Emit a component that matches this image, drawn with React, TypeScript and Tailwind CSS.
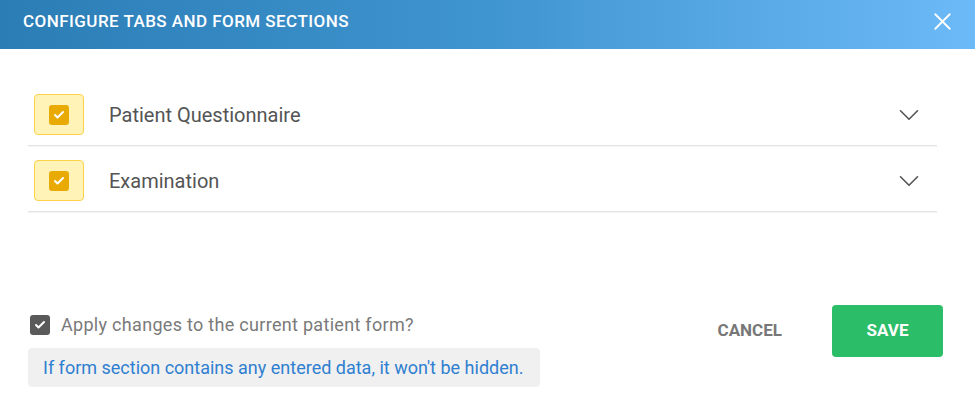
import { Check, ChevronDown, X } from "lucide-react";

const sections = ["Patient Questionnaire", "Examination"];

const App = () => {
  return (
    <div className="w-[975px] h-[415px] bg-white font-['Roboto',sans-serif] flex flex-col">
      <div className="h-[49px] shrink-0 flex items-center justify-between pl-[23px] pr-[18px] pb-[6px] bg-gradient-to-r from-[#2b7db5] via-[#3f95d0] to-[#6cbaf7]">
        <h1 className="text-white text-[17px] font-medium tracking-[0.45px]">
          CONFIGURE TABS AND FORM SECTIONS
        </h1>
        <X className="text-white w-[29px] h-[29px]" strokeWidth={1.5} />
      </div>

      <div className="pt-[31px] pl-[28px] pr-[38px]">
        {sections.map((name) => (
          <div
            key={name}
            className="flex items-center h-[66px] pt-[4px] border-b border-[#e3e3e3] shadow-[0_1px_1px_rgba(0,0,0,0.04)]"
          >
            <div className="ml-[6px] w-[50px] h-[41px] rounded-[4px] bg-[#fff3b8] border border-[#fdd24a] flex items-center justify-center">
              <div className="w-[20px] h-[20px] rounded-[3px] bg-[#eaaa05] flex items-center justify-center">
                <Check className="text-white w-[12px] h-[12px]" strokeWidth={4} />
              </div>
            </div>
            <span className="ml-[25px] text-[20px] text-[#545454] flex-1">{name}</span>
            <ChevronDown className="text-[#555] w-[34px] h-[34px] mr-[11px]" strokeWidth={1.15} />
          </div>
        ))}
      </div>

      <div className="flex-1 flex items-end justify-between pl-[28px] pr-[32px] pb-[28px]">
        <div className="flex flex-col">
          <label className="flex items-center gap-[11px] pl-[2px]">
            <span className="w-[20px] h-[20px] rounded-[3px] bg-[#5a5a5a] flex items-center justify-center">
              <Check className="text-white w-[12px] h-[12px]" strokeWidth={4} />
            </span>
            <span className="text-[18px] tracking-[0.3px] text-[#7a7a7a]">
              Apply changes to the current patient form?
            </span>
          </label>
          <div className="mt-[10px] w-[512px] h-[39px] rounded-[4px] bg-[#f0f0f0] flex items-center px-[15px] text-[18px] text-[#2f7fd1]">
            If form section contains any entered data, it won't be hidden.
          </div>
        </div>
        <div className="flex items-center mb-[30px]">
          <button className="text-[17px] font-bold text-[#777] mr-[50px]">CANCEL</button>
          <button className="w-[111px] h-[52px] rounded-[4px] bg-[#2bbd67] text-white text-[17px] font-bold">
            SAVE
          </button>
        </div>
      </div>
    </div>
  );
};

export default App;
